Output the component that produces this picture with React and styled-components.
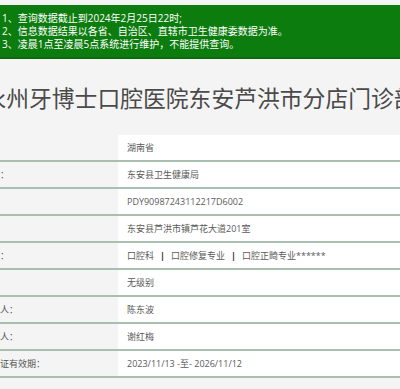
import React from "react";
import styled, { createGlobalStyle } from "styled-components";

const GlobalStyle = createGlobalStyle`
  html, body {
    margin: 0;
    padding: 0;
    background: #f4f4f4;
  }
  body {
    font-family: "Open Sans", "Noto Sans CJK SC", sans-serif;
    overflow: hidden;
  }
`;

const Page = styled.div`
  width: 100vw;
  height: 389px;
  overflow: hidden;
  display: flex;
  justify-content: center;
  padding-top: 5px;
  box-sizing: border-box;
`;

const Wrapper = styled.div`
  flex: 0 0 436px;
  width: 436px;
`;

const Notice = styled.div`
  background: #0c7c0e;
  border-bottom: 2px solid #0a6a0c;
  padding: 7px 0 6px 20px;
  color: #ffffff;
  font-size: 10px;
  line-height: 13px;
`;

const TitleBar = styled.div`
  display: flex;
  justify-content: center;
  height: 76px;
  align-items: center;
`;

const Title = styled.h1`
  margin: 0;
  flex: 0 0 auto;
  white-space: nowrap;
  font-size: 22.8px;
  font-weight: normal;
  color: #4a4a4a;
  font-family: "Noto Sans CJK SC", sans-serif;
`;

const Table = styled.div`
  display: grid;
  grid-template-columns: 136px 1fr;
`;

const Label = styled.div`
  height: 25px;
  line-height: 25px;
  font-size: 9px;
  color: #555;
  white-space: nowrap;
  border-bottom: 2px solid #a9bfb0;
`;

const Value = styled.div`
  height: 25px;
  line-height: 25px;
  background: #ffffff;
  padding-left: 9px;
  font-size: 9px;
  color: #5a5a5a;
  white-space: nowrap;
  border-bottom: 2px solid #a9bfb0;
`;

const Sep = styled.span`
  color: #333;
  font-weight: bold;
  padding: 0 6px;
`;

const rows = [
  ["省份", "湖南省"],
  ["机关：", "东安县卫生健康局"],
  ["编号", "PDY90987243112217D6002"],
  ["地址", "东安县芦洪市镇芦花大道201室"],
  [
    "科目：",
    <>
      口腔科<Sep>|</Sep>口腔修复专业<Sep>|</Sep>口腔正畸专业******
    </>,
  ],
  ["级别", "无级别"],
  ["负责人：", "陈东波"],
  ["联系人：", "谢红梅"],
  ["许可证有效期：", "2023/11/13 -至- 2026/11/12"],
];

const App = () => {
  return (
    <Page>
      <GlobalStyle />
      <Wrapper>
        <Notice>
          <div>1、查询数据截止到2024年2月25日22时;</div>
          <div>2、信息数据结果以各省、自治区、直辖市卫生健康委数据为准。</div>
          <div>3、凌晨1点至凌晨5点系统进行维护，不能提供查询。</div>
        </Notice>
        <TitleBar>
          <Title>永州牙博士口腔医院东安芦洪市分店门诊部</Title>
        </TitleBar>
        <Table>
          {rows.map(([label, value]) => (
            <React.Fragment key={label}>
              <Label>{label}</Label>
              <Value>{value}</Value>
            </React.Fragment>
          ))}
        </Table>
      </Wrapper>
    </Page>
  );
};

export default App;
